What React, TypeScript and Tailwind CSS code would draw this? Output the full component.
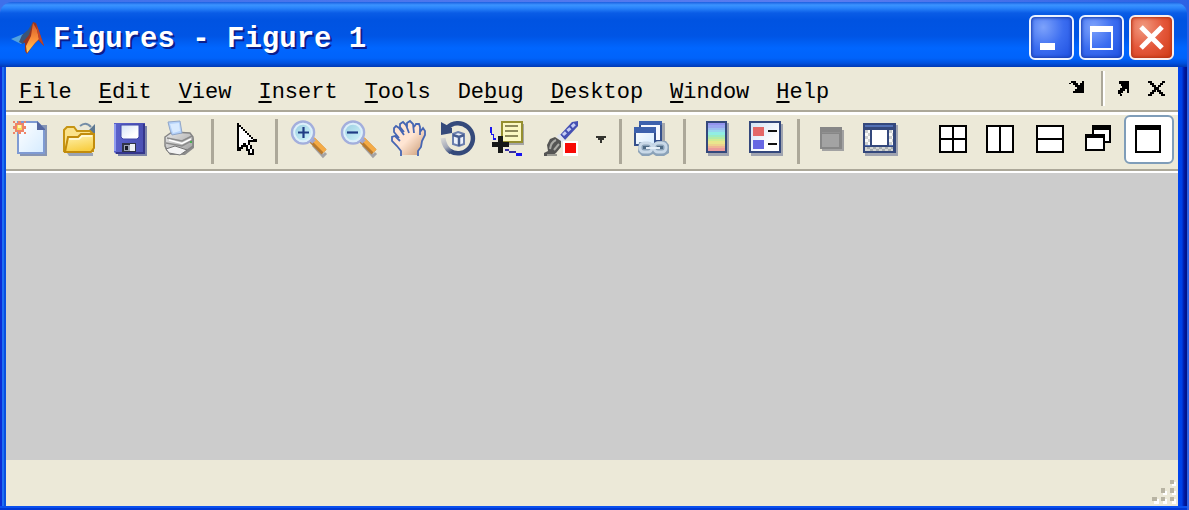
import type { ReactNode } from "react";

const NAVY = "#34487c";

function Icon({ children, width = 50, crisp = false }: { children: ReactNode; width?: number; crisp?: boolean }) {
  return (
    <svg
      aria-hidden="true"
      width={width}
      height={54}
      viewBox={`0 0 ${width} 54`}
      shapeRendering={crisp ? "crispEdges" : "auto"}
      className="shrink-0"
    >
      {children}
    </svg>
  );
}

const NewIcon = (
  <Icon>
    <path d="M14 10H41V41H14Z" fill="#8795b3" />
    <path d="M12 7H31L38 14V38H12Z" fill="url(#paper)" stroke="#7f9bd3" strokeWidth="2" />
    <path d="M31 6L39 14V15H31Z" fill="#5567a0" />
    <g fill="#ee8468">
      <path d="M9 8h9v9H9z" />
      <path d="M7 6h2v2H7zM18 6h2v2h-2zM7 17h2v2H7zM18 17h2v2h-2zM12 6h3v2h-3zM12 17h3v2h-3zM7 11h2v3H7zM18 11h2v3h-2z" />
    </g>
    <path d="M11 10h5v5h-5z" fill="#f6d95c" />
    <path d="M12 10h3v3h-3z" fill="#fdf6b5" />
  </Icon>
);

const OpenIcon = (
  <Icon>
    <path d="M11 38H37V41H13Z" fill="#9aa3b5" />
    <path d="M24 11Q30 6 35 12" fill="none" stroke="#758da6" strokeWidth="2" />
    <path d="M39 9V18H30Z" fill="#5d7892" />
    <path d="M8 36V15L11 12H18L21 16H34L37 19V36Z" fill="#fbe28a" stroke="#c69413" strokeWidth="2" />
    <path d="M9 37L12 22H22L25 19H38V33L35 37H9Z" fill="url(#folder)" stroke="#c28c0c" strokeWidth="2" />
    <path d="M13 24H23L26 21H36" fill="none" stroke="#fffbe2" strokeWidth="1.5" />
  </Icon>
);

const SaveIcon = (
  <Icon>
    <path d="M12 11H41V41H12Z" fill="#7c84a8" />
    <path d="M8 8H39V39H10L8 37Z" fill="url(#disk)" />
    <path d="M9 9V36" stroke="#8f9cf0" strokeWidth="2" />
    <path d="M38 9V38H10" fill="none" stroke="#34368c" strokeWidth="2" />
    <path d="M15 10H33V22L31 24H17L15 22Z" fill="url(#label)" stroke="#4149aa" />
    <path d="M16 28H30V37H16Z" fill="#303447" />
    <path d="M18 30H29V36H18Z" fill="#9ca4b4" />
    <path d="M24 29H29V36H24Z" fill="#eef0f4" />
    <path d="M19 31H22V35H19Z" fill="#171a26" />
  </Icon>
);

const PrintIcon = (
  <Icon>
    <path d="M9 33L36 21L38 24V33L29 40H14Z" fill="#8c8c8c" />
    <path d="M9 22L16 17L34 18L37 22V31L27 38L11 35L9 31Z" fill="url(#printer)" stroke="#858585" strokeWidth="1.5" />
    <path d="M12 7L24 6L26 18L16 20L14 15Z" fill="#b5d2fa" stroke="#91a6c8" />
    <path d="M14 9L23 8L24 16L17 18Z" fill="#d8eaff" />
    <path d="M11 23L26 26L36 21M10 28L26 31L37 25" fill="none" stroke="#8a8a8a" strokeWidth="1.5" />
    <path d="M13 25L26 28.500L35 24" fill="none" stroke="#fff" strokeWidth="1.5" />
    <path d="M10 34L19 31L31 35L24 40L13 38Z" fill="#f3f3f3" stroke="#777" />
    <path d="M34 26h2v2h-2z" fill="#4aac50" />
  </Icon>
);

const PointerIcon = (
  <Icon crisp>
    <path
      d="M17 8H19V10H21V12H23V14H25V16H27V18H29V20H31V22H33V24H37V27H30V30H32V34H34V40H28V36H26V32H23V34H21V36H17Z"
      fill="#000"
    />
    <path d="M19 12H21V14H23V16H25V18H27V20H29V22H31V24H33V25H28V30H30V34H32V38H30V34H28V30H26V28H23V30H21V32H19Z" fill="#fff" />
  </Icon>
);

function Magnifier({ plus }: { plus: boolean }) {
  return (
    <Icon>
      <path d="M29 30L39 41L42 38" fill="none" stroke="#a4a3a5" strokeWidth="3" />
      <path d="M28 25L40 37" stroke="#b87a2e" strokeWidth="7" />
      <path d="M29 24L41 36" stroke="#f5ab45" strokeWidth="4" />
      <path d="M26 23L30 27" stroke="#a6a7c9" strokeWidth="5" />
      <circle cx="19" cy="17.500" r="11" fill="url(#lens)" stroke="#a3aedc" strokeWidth="2.500" />
      <circle cx="19" cy="17.500" r="8.800" fill="none" stroke="#ddeffa" strokeWidth="2" />
      <path d={plus ? "M14 17.500H25M19.500 12V23" : "M13 17.500H24"} stroke="#203c85" strokeWidth="2.200" />
    </Icon>
  );
}

const HandIcon = (
  <Icon>
    <path
      d="M17 40V36L13 31L8 26V22H11L16 25L15 22L10 17V13L13 11L17 14L16 10L18 8H20L23 12V8L26 7L29 9L30 13L32 9H35L36 12V16L39 14L41 16V20L38 26L37 32L34 36V40Z"
      fill="url(#skin)"
    />
    <path
      d="M17 41V36L13 31L8 26V22L11 21L14 24L16 26M15 23L10 17V13L12 11L15 13L20 20M20 17L16 12V9L19 7L22 10L25 18M23 12V8L26 6L29 9L30 18M30 12L32 9H35L36 12V20M36 17L39 13L41 16V20L38 26L37 32L34 36V41"
      fill="none"
      stroke="#4666b3"
      strokeWidth="1.800"
    />
  </Icon>
);

const RotateIcon = (
  <Icon>
    <path d="M13 13A15 15 0 1 1 16 36" fill="none" stroke="#354a7b" strokeWidth="4.500" />
    <path d="M17 37Q10 32 9 23" fill="none" stroke="url(#fade)" strokeWidth="5" />
    <path d="M7 7L18 13V18L7 20Z" fill="#354a7b" />
    <path d="M24 17L30 19V29L25 31L19 29V19Z" fill="#edf2fb" stroke="#6b7fae" strokeWidth="2" />
    <path d="M19 20L25 22L30 20M25 22V31" fill="none" stroke="#475d90" strokeWidth="2.500" />
  </Icon>
);

const DataCursorIcon = (
  <Icon crisp>
    <path d="M19 9H40V30H19Z" fill="#a5a5a5" />
    <path d="M18 7H38V27H18Z" fill="#fbf8c3" stroke="#958f30" strokeWidth="2" />
    <path d="M21 11H34M21 16H34M21 21H34" stroke="#8e8a5b" strokeWidth="2" />
    <path d="M6 12H8V19H10V23H12V25H9V20H7V18H6Z" fill="#1915ef" />
    <path d="M21 34H25V36H21Z" fill="#352da2" />
    <path d="M25 36H32V38H25Z" fill="#352da2" />
    <path d="M32 38H38V41H32Z" fill="#1713ef" />
    <path d="M14 21H19V27H25V32H19V38H14V32H8V27H14Z" fill="#161818" />
  </Icon>
);

const BrushIcon = (
  <Icon>
    <path d="M26 20L38 7L44 6V11L31 25Z" fill="#4550b3" />
    <path d="M29 20L41 9" stroke="#c5cdf5" strokeWidth="3" strokeDasharray="4 2" />
    <path d="M24 20L30 27" stroke="#e1e5ef" strokeWidth="4" />
    <path d="M10 41V38L14 36L13 30L16 24L21 22L27 26V32L22 38L18 41Z" fill="#555554" />
    <path d="M16 34Q17 27 22 25M20 35L25 29" fill="none" stroke="#aaaaa5" strokeWidth="2" />
    <path d="M13 40H23" stroke="#999991" strokeWidth="2" />
    <path d="M29 26H44V41H29Z" fill="#fff" />
    <path d="M31 28H42V38H31Z" fill="#f80a05" />
  </Icon>
);

const LinkIcon = (
  <Icon>
    <path d="M15 8H37V30H15Z" fill="#a5a7ab" />
    <path d="M12 7H33V26H12Z" fill="#f7f9ff" stroke="#35508c" strokeWidth="2" />
    <path d="M11 6H34V10H11Z" fill="#3d61ad" />
    <path d="M7 13H27V30H7Z" fill="url(#paper)" stroke="#35508c" strokeWidth="2" />
    <path d="M6 12H28V18H6Z" fill="#3d61ad" />
    <path d="M11 27H21L25 29L29 26H38L41 30V38L36 41H28L25 39L21 41H14L10 37Z" fill="#8ba2b8" />
    <g fill="none" stroke="#c9d9e8" strokeWidth="3">
      <rect x="12" y="28" width="12" height="9" rx="4" />
      <rect x="26" y="28" width="12" height="9" rx="4" />
    </g>
    <g fill="#4e6b85">
      <path d="M15 31H21V34H15ZM29 31H35V34H29Z" />
    </g>
    <path d="M18 33H32" stroke="#e4eef7" strokeWidth="2" />
  </Icon>
);

const ColorbarIcon = (
  <Icon crisp>
    <path d="M16 8H37V41H16Z" fill="#a0a4b0" />
    <path d="M14 6H35V38H14Z" fill={NAVY} />
    {["#9494ee", "#9aa7ef", "#9bc0ef", "#98d7ed", "#91eee3", "#9cecc3", "#b3eba7", "#d0eb93", "#e9e68d", "#edd18e", "#efb594", "#eb9b9b"].map(
      (color, i) => (
        <rect key={color} x="16" y={8 + Math.round(i * 2.3)} width="17" height="3" fill={color} />
      ),
    )}
  </Icon>
);

const LegendIcon = (
  <Icon crisp>
    <path d="M9 9H41V41H9Z" fill="#a0a4b0" />
    <path d="M7 6H39V38H7Z" fill={NAVY} />
    <path d="M9 8H37V36H9Z" fill="url(#label)" />
    <path d="M11 12H22V21H11Z" fill="#e46767" />
    <path d="M11 25H22V34H11Z" fill="#6767e4" />
    <path d="M26 15H35V17H26ZM26 28H35V30H26Z" fill="#101010" />
  </Icon>
);

const HidePlotToolsIcon = (
  <Icon crisp>
    <path d="M16 15H38V36H16Z" fill="#a2a2a2" />
    <path d="M14 12H36V34H14Z" fill="#878787" />
    <path d="M16 17H34V18H16Z" fill="#919191" />
    <path d="M16 19H33V32H16Z" fill="#a3a3a3" />
  </Icon>
);

const ShowPlotToolsIcon = (
  <Icon crisp>
    <path d="M9 10H42V41H9Z" fill="#a0a4b0" />
    <path d="M7 8H40V38H7Z" fill={NAVY} />
    <path d="M9 10H37V12H9Z" fill="#5270b5" />
    <path d="M9 15H14V30H9ZM33 15H37V30H33Z" fill="url(#checker)" />
    <path d="M9 32H37V36H9Z" fill="#d3d5d2" />
    <path d="M11 32h3v2h-3zM17 32h3v2h-3zM23 32h3v2h-3zM29 32h3v2h-3zM35 32h2v2h-2zM14 34h3v2h-3zM20 34h3v2h-3zM26 34h3v2h-3zM32 34h3v2h-3z" fill="#a8aeb0" />
    <path d="M16 15H31V30H16Z" fill="#fff" />
    <path d="M9 30H14V31H9ZM33 30H37V31H33Z" fill="#5270b5" />
  </Icon>
);

const TileIcon = (
  <Icon width={49} crisp>
    <path d="M12 11H38V37H12ZM25 11V37M12 24H38" fill="#fff" stroke="#000" strokeWidth="2" />
  </Icon>
);

const LeftRightIcon = (
  <Icon width={49} crisp>
    <path d="M10 11H36V37H10ZM23 11V37" fill="#fff" stroke="#000" strokeWidth="2" />
  </Icon>
);

const TopBottomIcon = (
  <Icon width={49} crisp>
    <path d="M11 11H37V37H11ZM11 24H37" fill="#fff" stroke="#000" strokeWidth="2" />
  </Icon>
);

const FloatIcon = (
  <Icon width={49} crisp>
    <path d="M18 11H35V27H18Z" fill="#fff" stroke="#000" strokeWidth="2" />
    <path d="M17 10H36V15H17Z" fill="#000" />
    <path d="M11 20H29V35H11Z" fill="#fff" stroke="#000" strokeWidth="2" />
    <path d="M10 19H30V23H10Z" fill="#000" />
  </Icon>
);

const MaximizeIcon = (
  <svg aria-hidden="true" width="46" height="45" viewBox="0 0 46 45" shapeRendering="crispEdges">
    <path d="M10 9H34V35H10Z" fill="#fff" stroke="#000" strokeWidth="2" />
    <path d="M9 8H35V13H9Z" fill="#000" />
  </svg>
);

const GradientDefs = (
  <svg aria-hidden="true" className="absolute size-0">
    <defs>
      <linearGradient id="paper" x1="0" y1="0" x2="1" y2="1">
        <stop offset="0" stopColor="#fff" />
        <stop offset="1" stopColor="#d5ebff" />
      </linearGradient>
      <linearGradient id="label" x1="0" y1="0" x2="1" y2="1">
        <stop offset="0" stopColor="#d3e2f5" />
        <stop offset="0.7" stopColor="#fff" />
      </linearGradient>
      <linearGradient id="folder" x1="0" y1="0" x2="0.3" y2="1">
        <stop offset="0" stopColor="#fff5b8" />
        <stop offset="1" stopColor="#f8cf45" />
      </linearGradient>
      <linearGradient id="disk">
        <stop offset="0" stopColor="#5a62cb" />
        <stop offset="1" stopColor="#4a4fb2" />
      </linearGradient>
      <linearGradient id="printer" x1="0" y1="0" x2="1" y2="1">
        <stop offset="0" stopColor="#e9e9e9" />
        <stop offset="1" stopColor="#9e9e9e" />
      </linearGradient>
      <linearGradient id="lens" x1="0" y1="0" x2="1" y2="1">
        <stop offset="0" stopColor="#93c8dd" />
        <stop offset="1" stopColor="#d8faff" />
      </linearGradient>
      <linearGradient id="skin" x1="0" y1="0" x2="1" y2="1">
        <stop offset="0.5" stopColor="#ffe5d3" />
        <stop offset="1" stopColor="#c89870" />
      </linearGradient>
      <linearGradient id="fade" gradientUnits="userSpaceOnUse" x1="8" y1="23" x2="16" y2="38">
        <stop offset="0" stopColor="#d9d9d6" />
        <stop offset="0.6" stopColor="#a5aab8" />
        <stop offset="1" stopColor="#354a7b" />
      </linearGradient>
      <linearGradient id="flame" x1="0" y1="0" x2="0" y2="1">
        <stop offset="0" stopColor="#d45a29" />
        <stop offset="0.6" stopColor="#ff963d" />
        <stop offset="1" stopColor="#ffd25c" />
      </linearGradient>
      <pattern id="checker" width="6" height="6" patternUnits="userSpaceOnUse">
        <path d="M0 0H6V6H0Z" fill="#fafaf8" />
        <path d="M0 0H3V3H0ZM3 3H6V6H3Z" fill="#cdd0d0" />
      </pattern>
    </defs>
  </svg>
);

function AppLogo() {
  return (
    <svg aria-hidden="true" width="34" height="32" viewBox="0 0 34 32" className="shrink-0">
      <path d="M0 17L12 12L17 16L10 22L6 20Z" fill="#52a2df" />
      <path d="M11 13L17 8L22 0L19 15L12 22L8 20Z" fill="#3a5577" />
      <path d="M22 0L25 1L28 9L33 24L27 18L21 25L16 32L14 29L14 21L12 20L18 13Z" fill="#98351f" />
      <path d="M22 1L26 8L28 17L24 21L16 31L15 24L20 14Z" fill="url(#flame)" />
      <path d="M25 2L28 9L33 24L28 18Z" fill="#c2452a" />
    </svg>
  );
}

function Separator() {
  return (
    <div role="separator" className="h-[54px] w-3.5 shrink-0 pt-1 pl-[5px]">
      <div className="h-[45px] w-[3px] bg-[#aca899]" />
    </div>
  );
}

type Tool = { label: string; icon: ReactNode };

function ToolButton({ label, icon }: Tool) {
  return (
    <button type="button" aria-label={label} title={label} className="shrink-0">
      {icon}
    </button>
  );
}

const toolGroups: Tool[][] = [
  [
    { label: "New Figure", icon: NewIcon },
    { label: "Open File", icon: OpenIcon },
    { label: "Save Figure", icon: SaveIcon },
    { label: "Print Figure", icon: PrintIcon },
  ],
  [{ label: "Edit Plot", icon: PointerIcon }],
  [
    { label: "Zoom In", icon: <Magnifier plus /> },
    { label: "Zoom Out", icon: <Magnifier plus={false} /> },
    { label: "Pan", icon: HandIcon },
    { label: "Rotate 3D", icon: RotateIcon },
    { label: "Data Cursor", icon: DataCursorIcon },
    { label: "Brush", icon: BrushIcon },
    {
      label: "Brush colors",
      icon: (
        <Icon width={30} crisp>
          <path d="M12 21H22V23H20V25H18V28H16V25H14V23H12Z" fill="#34342f" />
        </Icon>
      ),
    },
  ],
  [{ label: "Link Plot", icon: LinkIcon }],
  [
    { label: "Insert Colorbar", icon: ColorbarIcon },
    { label: "Insert Legend", icon: LegendIcon },
  ],
  [
    { label: "Hide Plot Tools", icon: HidePlotToolsIcon },
    { label: "Show Plot Tools", icon: ShowPlotToolsIcon },
  ],
];

const layoutTools: Tool[] = [
  { label: "Tile", icon: TileIcon },
  { label: "Left/Right", icon: LeftRightIcon },
  { label: "Top/Bottom", icon: TopBottomIcon },
  { label: "Float", icon: FloatIcon },
];

/* text before the mnemonic, the mnemonic, text after it */
const menus = [
  ["", "F", "ile"],
  ["", "E", "dit"],
  ["", "V", "iew"],
  ["", "I", "nsert"],
  ["", "T", "ools"],
  ["De", "b", "ug"],
  ["", "D", "esktop"],
  ["", "W", "indow"],
  ["", "H", "elp"],
];

const captionButton =
  "flex size-[45px] items-center justify-center rounded-md border-2 border-[#edf3ff] shadow-[inset_0_0_3px_1px_#1a3fb0]";
const captionBlue = "bg-radial-[at_30%_25%] from-[#7da2fb] via-[#3b6df0] to-[#1d4fe0]";

function TitleBar() {
  return (
    <header className="flex h-[65px] items-center gap-2 rounded-t-xl bg-[linear-gradient(to_bottom,#1c5fe0_0,#3b93ff_3px,#2a85fb_6px,#0a5ce6_11px,#0053e1_18px,#0055e5_34px,#0066ff_46px,#0063fb_56px,#0052e0_61px,#0038b4_65px)] pt-1.5 pr-[13px] pl-[11px]">
      <AppLogo />
      <h1 className="grow pt-1 font-['Liberation_Mono',monospace] text-[29px] leading-8 font-bold whitespace-pre text-white [text-shadow:2px_2px_0_#0a1e8c]">
        Figures - Figure 1
      </h1>
      <div className="flex gap-[5px]">
        <button type="button" aria-label="Minimize" className={`${captionButton} ${captionBlue}`}>
          <svg aria-hidden="true" width="41" height="41" viewBox="0 0 41 41" shapeRendering="crispEdges">
            <path d="M9 26H24V33H9Z" fill="#fff" />
          </svg>
        </button>
        <button type="button" aria-label="Maximize" className={`${captionButton} ${captionBlue}`}>
          <svg aria-hidden="true" width="41" height="41" viewBox="0 0 41 41" shapeRendering="crispEdges">
            <path d="M10 10H31V32H10Z" fill="none" stroke="#fff" strokeWidth="2" />
            <path d="M9 9H32V15H9Z" fill="#fff" />
          </svg>
        </button>
        <button
          type="button"
          aria-label="Close"
          className="flex size-[45px] items-center justify-center rounded-md border-2 border-[#fbeeea] bg-radial-[at_30%_25%] from-[#f09a80] via-[#e4573a] to-[#cf3a14] shadow-[inset_0_0_3px_1px_#b53414]"
        >
          <svg aria-hidden="true" width="41" height="41" viewBox="0 0 41 41">
            <path d="M10 10L31 31M31 10L10 31" stroke="#fff" strokeWidth="5" />
          </svg>
        </button>
      </div>
    </header>
  );
}

function MenuBar() {
  return (
    <div className="flex h-[43px] items-center pr-3 pl-[13px]">
      <nav className="flex gap-[27px] font-['Liberation_Mono',monospace] text-[22px] leading-8 text-black">
        {menus.map(([before, key, after]) => (
          <button key={key + after} type="button" className="flex pt-2">
            {before}
            <span className="underline decoration-2 underline-offset-[3px] [text-decoration-skip-ink:none]">{key}</span>
            {after}
          </button>
        ))}
      </nav>
      <div className="ml-auto flex items-center">
        <button type="button" aria-label="Dock figure" className="mr-4">
          <svg aria-hidden="true" width="16" height="16" viewBox="0 0 16 16" shapeRendering="crispEdges">
            <path d="M0 2H2V0H7V2H9V4H11V2H13V0H15V12H4V10H6V8H8V6H6V4H4V2H2V3H0Z" fill="#000" />
          </svg>
        </button>
        <div role="separator" className="h-[35px] w-1 border-r-2 border-l-2 border-r-white border-l-[#aca899]" />
        <button type="button" aria-label="Undock figure" className="ml-[13px]">
          <svg aria-hidden="true" width="12" height="16" viewBox="0 0 12 16" shapeRendering="crispEdges">
            <path d="M1 0H11V12H9V8H7V10H5V12H3V13H4V15H2V13H0V9H2V7H4V5H3V3H1Z" fill="#000" />
          </svg>
        </button>
        <button type="button" aria-label="Close figure" className="ml-[18px]">
          <svg aria-hidden="true" width="18" height="16" viewBox="0 0 18 16" shapeRendering="crispEdges">
            <path
              d="M0 0H4V2H6V4H8V6H10V4H12V2H14V0H17V2H15V4H13V6H11V9H13V11H15V13H17V15H13V13H11V11H9V9H8V11H6V13H4V15H0V13H2V11H4V9H6V6H4V4H2V2H0Z"
              fill="#000"
            />
          </svg>
        </button>
      </div>
    </div>
  );
}

function ToolBar() {
  return (
    <div className="flex h-[63px] items-start border-t-2 border-b-2 border-t-[#aca899] border-b-white">
      <div className="flex h-full w-full items-start border-t-3 border-b-2 border-t-white border-b-[#aca899]">
        {toolGroups.map((group, i) => (
          <div key={group[0].label} className="flex shrink-0">
            {i > 0 && <Separator />}
            {group.map((tool) => (
              <ToolButton key={tool.label} {...tool} />
            ))}
          </div>
        ))}
        <div className="ml-auto flex shrink-0 pr-1">
          {layoutTools.map((tool) => (
            <ToolButton key={tool.label} {...tool} />
          ))}
          <button
            type="button"
            aria-label="Maximize layout"
            aria-pressed="true"
            className="flex h-[49px] w-[50px] items-center justify-center rounded-md border-2 border-[#7f9db9] bg-white"
          >
            {MaximizeIcon}
          </button>
        </div>
      </div>
    </div>
  );
}

function StatusBar() {
  return (
    <footer className="flex h-[46px] items-end justify-end pr-0.5 pb-0.5">
      <svg aria-hidden="true" width="24" height="24" viewBox="0 0 24 24" shapeRendering="crispEdges">
        <path d="M20 2h4v4h-4zM11 11h4v4h-4zM20 11h4v4h-4zM2 19h5v5H2zM11 19h4v5h-4zM20 19h4v5h-4z" fill="#fff" />
        <path d="M18 0h4v4h-4zM9 8h4v5H9zM18 8h4v5h-4zM0 17h5v4H0zM9 17h4v4H9zM18 17h4v4h-4z" fill="#b8b4a3" />
      </svg>
    </footer>
  );
}

export default function App() {
  return (
    <div className="flex min-h-screen flex-col bg-[linear-gradient(to_right,#3e70ea,#5a7cf0_70%,#2c62e4)] pt-0.5 pr-0.5">
      {GradientDefs}
      <TitleBar />
      <div className="flex grow">
        <div className="w-1.5 shrink-0 bg-[linear-gradient(to_right,#0a2cd6_2px,#1f6ff2_2px,#1f6ff2_4px,#0850e0_4px)]" />
        <main className="flex min-w-0 grow flex-col bg-[#ece9d8]">
          <MenuBar />
          <ToolBar />
          <section aria-label="Figure canvas" className="grow bg-[#ccc]" />
          <StatusBar />
        </main>
        <div className="w-[9px] shrink-0 bg-[linear-gradient(to_right,#0045ee_0,#0040e4_4px,#0029c0_5px,#00159a_7px,#001486_9px)]" />
      </div>
      <div className="h-1 shrink-0 bg-[linear-gradient(to_bottom,#0a50ee_2px,#0038d4_2px)]" />
    </div>
  );
}
